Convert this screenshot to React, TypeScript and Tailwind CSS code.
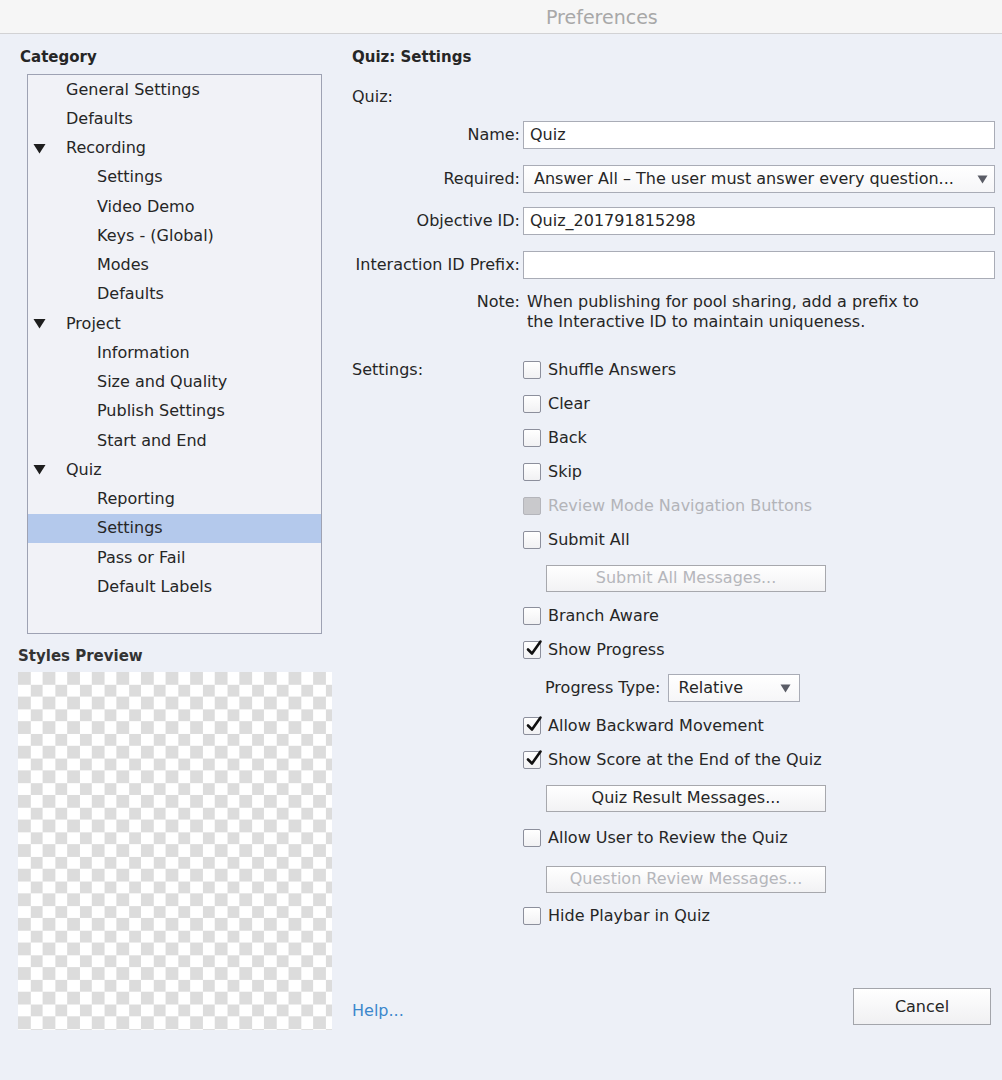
import React from "react";

const treeRows: { label: string; level: 0 | 1 | 2; open?: boolean; selected?: boolean }[] = [
  { label: "General Settings", level: 1 },
  { label: "Defaults", level: 1 },
  { label: "Recording", level: 0, open: true },
  { label: "Settings", level: 2 },
  { label: "Video Demo", level: 2 },
  { label: "Keys - (Global)", level: 2 },
  { label: "Modes", level: 2 },
  { label: "Defaults", level: 2 },
  { label: "Project", level: 0, open: true },
  { label: "Information", level: 2 },
  { label: "Size and Quality", level: 2 },
  { label: "Publish Settings", level: 2 },
  { label: "Start and End", level: 2 },
  { label: "Quiz", level: 0, open: true },
  { label: "Reporting", level: 2 },
  { label: "Settings", level: 2, selected: true },
  { label: "Pass or Fail", level: 2 },
  { label: "Default Labels", level: 2 },
];

function Triangle() {
  return (
    <svg width="13" height="11" viewBox="0 0 13 11" className="shrink-0">
      <polygon points="0.5,1 12.5,1 6.5,10.5" fill="#1e1e1e" />
    </svg>
  );
}

function SmallArrow() {
  return (
    <svg width="11" height="9" viewBox="0 0 11 9">
      <polygon points="0.5,0.5 10.5,0.5 5.5,8.5" fill="#5a5c66" />
    </svg>
  );
}

function Checkbox({ checked, disabled }: { checked?: boolean; disabled?: boolean }) {
  return (
    <div
      className={`relative h-[18px] w-[18px] shrink-0 rounded-[2px] border border-[#8c8f9c] ${
        disabled ? "bg-[#c9c9cc] border-[#b4b5bb]" : "bg-gradient-to-b from-white to-[#f1f1f3]"
      }`}
    >
      {checked && (
        <svg width="20" height="20" viewBox="0 0 20 20" className="absolute -top-[4px] left-[1px]">
          <path
            d="M3 11.5 L7 15.5 L15.5 3.5"
            fill="none"
            stroke="#111"
            strokeWidth="2.6"
            strokeLinecap="round"
            strokeLinejoin="round"
          />
        </svg>
      )}
    </div>
  );
}

function CheckRow({
  label,
  checked,
  disabled,
  h = "h-[34px]",
}: {
  label: string;
  checked?: boolean;
  disabled?: boolean;
  h?: string;
}) {
  return (
    <div className={`flex ${h} items-center`}>
      <div className="w-[171px]" />
      <Checkbox checked={checked} disabled={disabled} />
      <span className={`ml-[7px] ${disabled ? "text-[#b3b4b9]" : "text-[#262626]"}`}>{label}</span>
    </div>
  );
}

function MacButton({ label, disabled }: { label: string; disabled?: boolean }) {
  return (
    <div
      className={`flex h-[27px] w-[280px] items-center justify-center border border-[#a7a8ad] bg-gradient-to-b from-white to-[#f2f2f4] ${
        disabled ? "text-[#b5b6bb]" : "text-[#262626]"
      }`}
    >
      {label}
    </div>
  );
}

function FieldRow({ label, children, mt }: { label: string; children: React.ReactNode; mt: string }) {
  return (
    <div className={`flex h-[28px] items-center ${mt}`}>
      <div className="w-[168px] shrink-0 text-right text-[#262626]">{label}</div>
      <div className="ml-[3px] h-full flex-1">{children}</div>
    </div>
  );
}

export default function App() {
  return (
    <div
      className="flex h-[1080px] w-[1002px] flex-col bg-[#edf0f7] text-[16px] leading-[20px] text-[#262626]"
      style={{ fontFamily: '"DejaVu Sans", "Open Sans", sans-serif' }}
    >
      {/* Title bar */}
      <div className="flex h-[34px] shrink-0 items-center border-b border-[#d2d2d4] bg-[#f6f6f6] pl-[546px]">
        <span className="text-[19px] text-[#a8a8a8]">Preferences</span>
      </div>

      <div className="flex flex-1">
        {/* Left column */}
        <div className="ml-[18px] flex w-[314px] flex-col">
          <div className="mt-[10px] flex h-[26px] items-center pl-[2px] text-[15px] font-bold">Category</div>
          <div className="ml-[9px] mt-[4px] h-[560px] w-[295px] border border-[#9ea2b3] bg-[#f1f2f7]">
            {treeRows.map((r, i) => (
              <div
                key={i}
                className={`flex h-[29.25px] items-center ${r.selected ? "bg-[#b4c9ec]" : ""}`}
              >
                {r.level === 0 ? (
                  <>
                    <div className="ml-[5px] w-[33px]">
                      <Triangle />
                    </div>
                    <span>{r.label}</span>
                  </>
                ) : (
                  <span className={r.level === 1 ? "pl-[38px]" : "pl-[69px]"}>{r.label}</span>
                )}
              </div>
            ))}
          </div>
          <div className="mt-[10px] flex h-[24px] items-center text-[15px] font-semibold text-[#333]">
            Styles Preview
          </div>
          <div className="mt-[4px] h-[358px] w-[314px] bg-[image:conic-gradient(#ffffff_25%,#dcdcdc_0_50%,#ffffff_0_75%,#dcdcdc_0)] bg-[length:24.6px_24.6px]" />
        </div>

        {/* Right column */}
        <div className="ml-[20px] mr-[7px] flex flex-1 flex-col">
          <div className="mt-[10px] flex h-[26px] items-center text-[15px] font-bold">Quiz: Settings</div>
          <div className="mt-[14px] flex h-[26px] items-center">Quiz:</div>

          <FieldRow label="Name:" mt="mt-[11px]">
            <div className="flex h-full items-center border border-[#a9acb6] bg-white px-[6px]">Quiz</div>
          </FieldRow>
          <FieldRow label="Required:" mt="mt-[16px]">
            <div className="flex h-full items-center justify-between border border-[#a9acb6] bg-gradient-to-b from-white to-[#f6f6f8] pl-[10px] pr-[6px]">
              <span>Answer All – The user must answer every question...</span>
              <SmallArrow />
            </div>
          </FieldRow>
          <FieldRow label="Objective ID:" mt="mt-[14px]">
            <div className="flex h-full items-center border border-[#a9acb6] bg-white px-[6px]">Quiz_201791815298</div>
          </FieldRow>
          <FieldRow label="Interaction ID Prefix:" mt="mt-[16px]">
            <div className="h-full border border-[#a9acb6] bg-white" />
          </FieldRow>

          <div className="mt-[13px] flex">
            <div className="w-[168px] shrink-0 text-right">Note:</div>
            <div className="ml-[7px]">
              <div>When publishing for pool sharing, add a prefix to</div>
              <div>the Interactive ID to maintain uniqueness.</div>
            </div>
          </div>

          <div className="mt-[21px] flex h-[34px] items-center">
            <div className="w-[171px]">Settings:</div>
            <Checkbox />
            <span className="ml-[7px]">Shuffle Answers</span>
          </div>
          <CheckRow label="Clear" />
          <CheckRow label="Back" />
          <CheckRow label="Skip" />
          <CheckRow label="Review Mode Navigation Buttons" disabled />
          <CheckRow label="Submit All" />
          <div className="flex h-[42px] items-center pl-[194px]">
            <MacButton label="Submit All Messages..." disabled />
          </div>
          <CheckRow label="Branch Aware" />
          <CheckRow label="Show Progress" checked />
          <div className="flex h-[42px] items-center pl-[193px]">
            <span>Progress Type:</span>
            <div className="ml-[7px] flex h-[28px] w-[132px] items-center justify-between border border-[#a9acb6] bg-gradient-to-b from-white to-[#f6f6f8] pl-[10px] pr-[8px]">
              <span>Relative</span>
              <SmallArrow />
            </div>
          </div>
          <CheckRow label="Allow Backward Movement" checked />
          <CheckRow label="Show Score at the End of the Quiz" checked />
          <div className="flex h-[42px] items-center pl-[194px]">
            <MacButton label="Quiz Result Messages..." />
          </div>
          <CheckRow label="Allow User to Review the Quiz" h="h-[38px]" />
          <div className="flex h-[44px] items-center pl-[194px]">
            <MacButton label="Question Review Messages..." disabled />
          </div>
          <CheckRow label="Hide Playbar in Quiz" h="h-[30px]" />

          <div className="mb-[55px] mt-auto flex items-center justify-between">
            <span className="mt-[8px] text-[#3b87cc]">Help...</span>
            <div className="mr-[4px] flex h-[37px] w-[138px] items-center justify-center border border-[#a3a5ab] bg-gradient-to-b from-white to-[#f0f0f2]">
              Cancel
            </div>
          </div>
        </div>
      </div>
    </div>
  );
}
